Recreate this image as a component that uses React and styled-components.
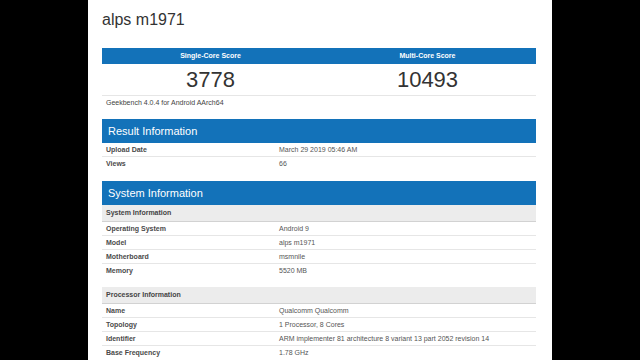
import React from "react";
import styled, { createGlobalStyle } from "styled-components";

const GlobalStyle = createGlobalStyle`
  html, body {
    margin: 0;
    padding: 0;
    background: #000;
  }
  body {
    font-family: "Liberation Sans", Arial, sans-serif;
    color: #333;
  }
`;

const BLUE = "#1372b9";

const Stage = styled.div`
  display: flex;
  justify-content: center;
  width: 640px;
  height: 360px;
  overflow: hidden;
  background: #000;
`;

const Page = styled.div`
  width: 464px;
  height: 360px;
  background: #fff;
  padding: 0 16px 0 14px;
  box-sizing: border-box;
  display: flex;
  flex-direction: column;
`;

const Title = styled.h1`
  margin: 0 0 18px;
  padding-top: 10px;
  font-size: 16px;
  line-height: 20px;
  font-weight: normal;
  color: #333;
`;

const ScoreTable = styled.div`
  display: grid;
  grid-template-columns: 1fr 1fr;
`;

const ScoreHead = styled.div`
  height: 16px;
  line-height: 16px;
  background: ${BLUE};
  color: #fff;
  font-size: 7px;
  font-weight: bold;
  text-align: center;
`;

const ScoreValue = styled.div`
  height: 31px;
  line-height: 32px;
  font-size: 22px;
  text-align: center;
  color: #333;
  border-bottom: 1px solid #e6e6e6;
`;

const Platform = styled.div`
  padding: 2px 4px 0;
  height: 10px;
  line-height: 10px;
  font-size: 7px;
  color: #444;
  margin-bottom: 11px;
`;

const Section = styled.section`
  margin-bottom: 11px;
`;

const Bar = styled.h2`
  margin: 0;
  height: 24px;
  line-height: 24px;
  padding-left: 6px;
  background: ${BLUE};
  color: #fff;
  font-size: 11px;
  font-weight: normal;
`;

const Group = styled.div`
  & + & {
    margin-top: 10px;
  }
`;

const SubHead = styled.div`
  height: 16px;
  line-height: 16px;
  padding-left: 4px;
  background: #ececec;
  border-bottom: 1px solid #d2d2d2;
  font-size: 7px;
  font-weight: bold;
  color: #444;
`;

const Row = styled.div`
  display: grid;
  grid-template-columns: 173px 1fr;
  height: 13px;
  line-height: 13px;
  font-size: 7px;

  & + & {
    border-top: 1px solid #e6e6e6;
  }
`;

const Label = styled.div`
  padding: 0 4px;
  font-weight: bold;
  color: #4a4a4a;
`;

const Value = styled.div`
  padding: 0 4px;
  color: #555;
  white-space: nowrap;
`;

const result = [
  ["Upload Date", "March 29 2019 05:46 AM"],
  ["Views", "66"],
];

const system = [
  {
    title: "System Information",
    rows: [
      ["Operating System", "Android 9"],
      ["Model", "alps m1971"],
      ["Motherboard", "msmnile"],
      ["Memory", "5520 MB"],
    ],
  },
  {
    title: "Processor Information",
    rows: [
      ["Name", "Qualcomm Qualcomm"],
      ["Topology", "1 Processor, 8 Cores"],
      ["Identifier", "ARM implementer 81 architecture 8 variant 13 part 2052 revision 14"],
      ["Base Frequency", "1.78 GHz"],
    ],
  },
];

const Rows = ({ rows }) =>
  rows.map(([k, v]) => (
    <Row key={k}>
      <Label>{k}</Label>
      <Value>{v}</Value>
    </Row>
  ));

const App = () => {
  return (
    <Stage>
      <GlobalStyle />
      <Page>
        <Title>alps m1971</Title>

        <ScoreTable>
          <ScoreHead>Single-Core Score</ScoreHead>
          <ScoreHead>Multi-Core Score</ScoreHead>
          <ScoreValue>3778</ScoreValue>
          <ScoreValue>10493</ScoreValue>
        </ScoreTable>
        <Platform>Geekbench 4.0.4 for Android AArch64</Platform>

        <Section>
          <Bar>Result Information</Bar>
          <Group>
            <Rows rows={result} />
          </Group>
        </Section>

        <Section>
          <Bar>System Information</Bar>
          {system.map((g) => (
            <Group key={g.title}>
              <SubHead>{g.title}</SubHead>
              <Rows rows={g.rows} />
            </Group>
          ))}
        </Section>
      </Page>
    </Stage>
  );
};

export default App;
